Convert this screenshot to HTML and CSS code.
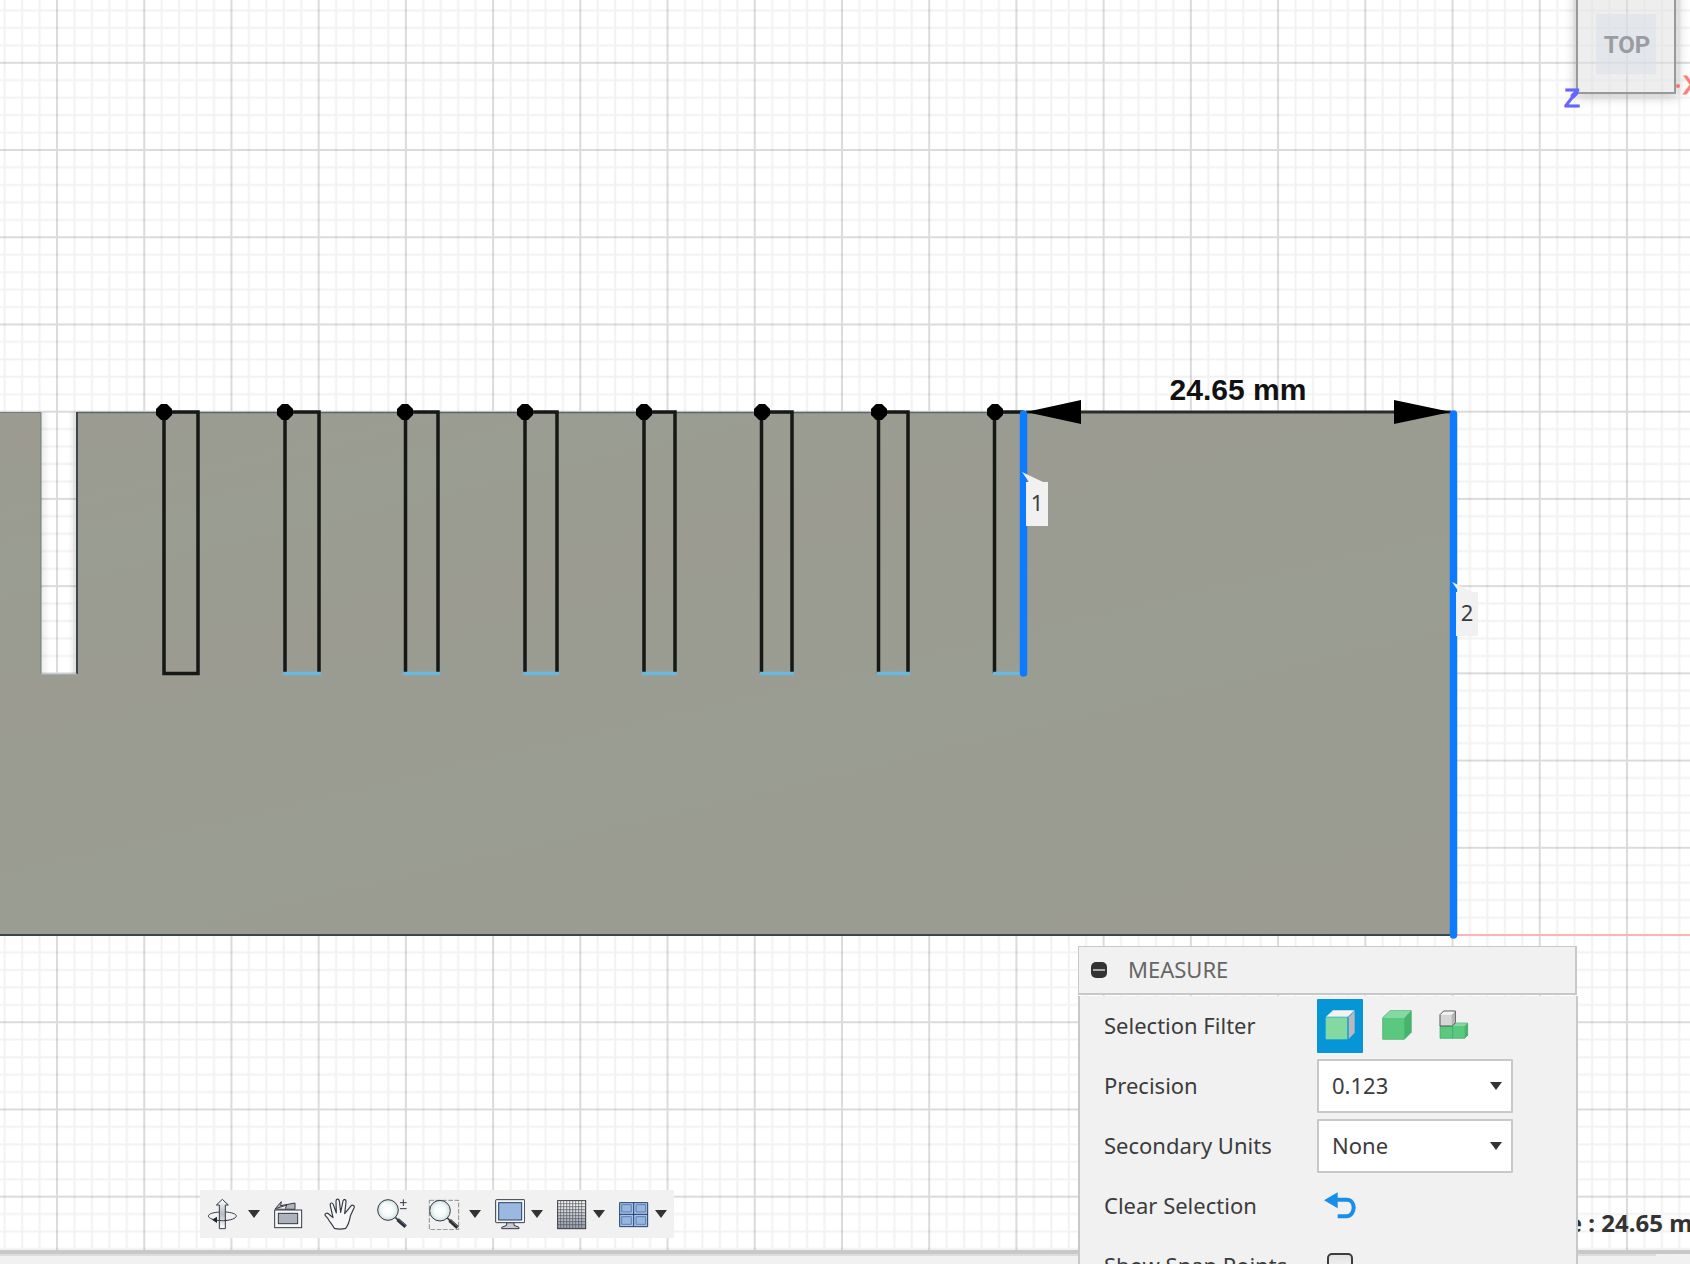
FILE: index.html
```html
<!DOCTYPE html>
<html lang="en">
<head>
<meta charset="utf-8">
<meta name="viewport" content="width=device-width, initial-scale=1">
<title>Measure</title>
<link rel="stylesheet" href="styles.css">
</head>
<body>
<main class="stage">
  <svg class="scene" role="img" aria-label="Model with measured distance">
    <defs>
      <pattern id="grid" patternUnits="userSpaceOnUse" x="13.4" y="19.2" width="87.22" height="87.22">
        <g stroke="#000" stroke-opacity=".05" stroke-width="2">
          <path d="M8.72 0V88M26.16 0V88M61.04 0V88M78.48 0V88M0 8.72H88M0 26.16H88M0 61.04H88M0 78.48H88"/>
          <path d="M43.6 0V88M0 43.6H88" stroke-opacity=".14"/>
        </g>
      </pattern>
      <linearGradient id="steel" gradientUnits="userSpaceOnUse" x1="0" y1="412" x2="180" y2="1180" spreadMethod="reflect">
        <stop offset="0" stop-color="#9c9b91"/><stop offset=".2" stop-color="#9a9d92"/>
        <stop offset=".36" stop-color="#9b9b91"/><stop offset=".62" stop-color="#9a9d92"/><stop offset="1" stop-color="#9b9b91"/>
      </linearGradient>
      <linearGradient id="slotShade"><stop offset="0" stop-color="#000" stop-opacity=".08"/><stop offset=".25" stop-color="#000" stop-opacity="0"/><stop offset=".75" stop-color="#000" stop-opacity="0"/><stop offset="1" stop-color="#000" stop-opacity=".1"/></linearGradient>
    </defs>
    <rect width="100%" height="100%" fill="#fff"/>
    <rect width="100%" height="100%" fill="url(#grid)"/>
    <rect x="1453" y="934" width="100%" height="2" fill="#ffb3b3"/>
    <path d="M0 412H41V674H77V412H1453V935H0Z" fill="url(#steel)"/>
    <path d="M41 412H77V674H41Z" fill="url(#slotShade)"/>
    <path d="M0 412.500H41V674" fill="none" stroke="#6f7d7c"/>
    <path d="M77 412.500H1023" fill="none" stroke="#59696a" stroke-width="1.500"/>
    <path d="M77 412V674M0 935H1453" fill="none" stroke="#3a484b" stroke-width="2"/>
    <path d="M41 674H77" stroke="#b4c0c6"/>
    <g fill="none" stroke="#161815" stroke-width="3.500">
      <path d="M164 673.500V412H198V673.500Z"/>
      <path d="M285 673V412H319V673M405.500 673V412H438V673M525 673V412H557V673M644 673V412H675V673M761.500 673V412H792V673M878.500 673V412H908V673M994.500 673V412H1023"/>
    </g>
    <path d="M283 673.500H321M403 673.500H440M523 673.500H559M642 673.500H677M760 673.500H794M877 673.500H910M993 673.500H1023" stroke="#68b9dd" stroke-width="3.500"/>
    <g fill="#000">
      <path id="dot" d="M161 404H167L172 409V415L167 420H161L156 415V409Z"/>
      <use href="#dot" x="121"/><use href="#dot" x="241"/><use href="#dot" x="361"/><use href="#dot" x="480"/><use href="#dot" x="598"/><use href="#dot" x="715"/><use href="#dot" x="831"/>
    </g>
    <path d="M1026 412H1451" stroke="#2c2c2a" stroke-width="3"/>
    <path d="M1023.500 414V673M1453.500 414V935" stroke="#0d7bff" stroke-width="7.500" stroke-linecap="round"/>
    <path d="M1026 412L1081 400V424ZM1451 412L1394 400V424Z"/>
    <text class="dimension" x="1238" y="400">24.65 mm</text>
    <g fill="#f1f1f1">
      <path d="M1022 472L1043 482H1048V526H1026V482H1029Z"/>
      <path d="M1452 582L1473 592H1478V636H1456V592H1459Z"/>
    </g>
    <text class="tag" x="1037" y="511">1</text>
    <text class="tag" x="1467" y="621">2</text>
  </svg>

  <svg class="viewcube" viewBox="0 0 150 130" role="img" aria-label="View cube">
    <defs><filter id="soft" x="-30%" y="-30%" width="160%" height="160%"><feGaussianBlur stdDeviation="6"/></filter>
    <mask id="outside"><path d="M0 0H150V130H0Z" fill="#fff"/><path d="M37 0H135V93H37Z"/></mask></defs>
    <g mask="url(#outside)"><path d="M35 -20H138V97H35Z" fill="#777" opacity=".4" filter="url(#soft)"/></g>
    <path d="M37 -4H135V93H37Z" fill="#dedede" fill-opacity=".52" stroke="#999" stroke-width="2"/>
    <path d="M56 14H116V74H56Z" fill="#d8dee8" fill-opacity=".5"/>
    <text class="cube-face" x="87" y="53">TOP</text>
    <path d="M36 93L33 96" stroke="#66f" stroke-width="5" stroke-linecap="round"/>
    <text class="axis axis-z" x="24" y="107">Z</text>
    <circle cx="138" cy="86" r="2" fill="#ff7070"/>
    <text class="axis axis-x" x="143" y="94">X</text>
  </svg>

  <output class="readout">e : 24.65 mm</output>

  <nav class="toolbar" aria-label="Navigation">
    <div class="split">
      <button class="tool" aria-label="Orbit"><svg viewBox="0 0 96 96"><defs><linearGradient id="metal" x2="0" y2="1"><stop stop-color="#fff"/><stop offset=".5" stop-color="#b7bac5"/><stop offset="1" stop-color="#fff"/></linearGradient></defs><path d="M39 42C18 43 4 48 4 54C4 61 22 68 46 68S88 61 88 54C88 48 74 43 55 42" fill="none" stroke="#343943" stroke-width="3"/><path d="M46 4L64 21H55V92H37V21H28Z" fill="url(#metal)" stroke="#343943" stroke-width="3"/><path d="M37 67C46 69 54 68 60 67" fill="none" stroke="#343943" stroke-width="3"/><path d="M15 65L30 56V75Z" fill="#20242c"/></svg></button>
      <button class="caret" aria-label="Orbit options"></button>
    </div>
    <div class="tools">
      <button class="tool" aria-label="Look at"><svg viewBox="0 0 96 96"><path d="M9 33L28 11L26 23L69 15V34Z" fill="#b0b5bd" stroke="#343943" stroke-width="3"/><path d="M14 31L44 21L40 32" fill="#eee" stroke="#343943" stroke-width="3"/><rect x="8" y="36" width="81" height="53" fill="#f8f8fb" stroke="#343943" stroke-width="3"/><rect x="19" y="46" width="58" height="31" fill="#aeb2ba" stroke="#343943" stroke-width="3"/></svg></button>
      <button class="tool" aria-label="Pan"><svg viewBox="0 0 96 96"><path d="M31 91C25 79 18 73 12 62L4 53C1 47 8 43 14 48L27 59L19 23C17 14 25 12 28 20L37 45L36 10C36 2 44 1 46 9L50 43L57 9C59 2 67 4 66 12L62 47L80 25C86 18 93 23 90 30L79 54C77 66 76 77 65 91C54 94 42 94 31 91Z" fill="#f7f7f9" stroke="#343943" stroke-width="3.500" stroke-linejoin="round"/></svg></button>
      <button class="tool" aria-label="Zoom"><svg viewBox="0 0 96 96"><defs><radialGradient id="lens"><stop stop-color="#fff"/><stop offset=".55" stop-color="#f5fafa"/><stop offset="1" stop-color="#cfe0df"/></radialGradient></defs><path d="M58 58L66 66" stroke="#343943" stroke-width="5"/><path d="M65 65L89 86" stroke="#2b323b" stroke-width="11"/><path d="M68 64L90 83" stroke="#7c858d" stroke-width="2"/><circle cx="36" cy="36" r="31" fill="url(#lens)" stroke="#343943" stroke-width="3"/><path d="M12 32Q17 14 33 11Q25 21 12 32" fill="#fff"/><path d="M82 4V24M72 14H92M72 32H92" stroke="#343943" stroke-width="3"/></svg></button>
      <div class="split">
        <button class="tool" aria-label="Zoom window"><svg viewBox="0 0 96 96"><rect x="4" y="7" width="88" height="88" fill="none" stroke="#777" stroke-width="2.500" stroke-dasharray="14 5"/><path d="M58 60L66 68" stroke="#343943" stroke-width="5"/><path d="M65 67L89 89" stroke="#30302f" stroke-width="11"/><path d="M68 66L90 86" stroke="#888" stroke-width="2"/><circle cx="36" cy="38" r="31" fill="url(#lens)" stroke="#343943" stroke-width="3"/></svg></button>
        <button class="caret" aria-label="Zoom window options"></button>
      </div>
    </div>
    <div class="split tight">
      <button class="tool" aria-label="Display settings"><svg viewBox="0 0 96 96"><path d="M41 74H63V82L78 88V92H26V88L41 82Z" fill="#c9ccd3" stroke="#343943" stroke-width="3"/><rect x="8" y="5" width="87" height="69" rx="2" fill="#f8f8fa" stroke="#343943" stroke-width="3"/><rect x="17" y="14" width="69" height="52" fill="#9ab8e0" stroke="#22416f" stroke-width="3"/></svg></button>
      <button class="caret" aria-label="Display options"></button>
    </div>
    <div class="split tight">
      <button class="tool" aria-label="Grid and snaps"><svg viewBox="0 0 96 96"><defs><linearGradient id="mesh" x2="0" y2="1"><stop stop-color="#fff"/><stop offset="1" stop-color="#929dac"/></linearGradient></defs><rect x="8" y="8" width="84" height="84" fill="url(#mesh)" stroke="#333" stroke-width="3"/><path d="M17 8V92M26 8V92M35 8V92M44 8V92M53 8V92M62 8V92M71 8V92M80 8V92M8 17H92M8 26H92M8 35H92M8 44H92M8 53H92M8 62H92M8 71H92M8 80H92" stroke="#505257" stroke-width="2"/></svg></button>
      <button class="caret" aria-label="Grid options"></button>
    </div>
    <div class="split tight">
      <button class="tool" aria-label="Viewports"><svg viewBox="0 0 96 96"><path d="M8 14H92V86H8Z" fill="#a9c4e6" stroke="#1f3d6e" stroke-width="3"/><path d="M50 14V86M8 49H92" stroke="#1f3d6e" stroke-width="3"/><path d="M14 20H43V42H14ZM57 20H86V42H57ZM14 56H43V79H14ZM57 56H86V79H57Z" fill="#97b6de" stroke="#5c80b1" stroke-width="3"/></svg></button>
      <button class="caret" aria-label="Viewport options"></button>
    </div>
  </nav>

  <section class="panel" aria-labelledby="panel-title">
    <header class="panel-head">
      <button class="collapse" aria-label="Collapse"></button>
      <h1 class="panel-title" id="panel-title">MEASURE</h1>
    </header>
    <form class="panel-body">
      <div class="row">
        <span class="label" id="filter-label">Selection Filter</span>
        <div class="filters" role="group" aria-labelledby="filter-label">
          <button type="button" class="filter active" aria-label="Faces, edges and vertices"><svg viewBox="0 0 90 90"><path d="M3 20L24 1H89L69 20Z" fill="#f2f2f2"/><path d="M71 22L89 2V68L71 87Z" fill="#b9b9bd"/><path d="M2 22H67V88H2Z" fill="#82d9a1"/></svg></button>
          <button type="button" class="filter" aria-label="Bodies"><svg viewBox="0 0 90 90"><path d="M2 23L24 2H88V67L67 88H2Z" fill="#5bc880" stroke="#3ca763" stroke-width="2"/><path d="M3 24L24 3H87L67 24Z" fill="#82d9a1"/><path d="M67 24L87 3V67L67 87Z" fill="#49b26c"/></svg></button>
          <button type="button" class="filter" aria-label="Components"><svg viewBox="0 0 90 90"><path d="M3 46H41V85H3Z" fill="#5bc880" stroke="#3ca763" stroke-width="2"/><path d="M41 48L51 39H86V76L77 85H41Z" fill="#5bc880" stroke="#3ca763" stroke-width="2"/><path d="M42 48L52 40H85L77 48Z" fill="#82d9a1"/><path d="M77 48L86 40V76L77 85Z" fill="#49b26c"/><path d="M3 14L14 3H49V38L38 48H3Z" fill="#d6d6d6" stroke="#555" stroke-width="3"/><path d="M5 14L15 5H47L38 14Z" fill="#f5f5f5"/><path d="M38 14L48 5V37L38 46Z" fill="#b5b5b5"/></svg></button>
        </div>
      </div>
      <div class="row">
        <label class="label" for="precision">Precision</label>
        <div class="field"><select id="precision"><option>0.123</option></select></div>
      </div>
      <div class="row">
        <label class="label" for="units">Secondary Units</label>
        <div class="field"><select id="units"><option>None</option></select></div>
      </div>
      <div class="row">
        <span class="label" id="clear-label">Clear Selection</span>
        <button type="button" class="filter" aria-labelledby="clear-label"><svg class="undo" viewBox="0 0 96 80"><path d="M0 24L41 0V48Z" fill="#178fea"/><path d="M38 23H68C82 23 89 34 89 46S82 72 68 72H41" fill="none" stroke="#178fea" stroke-width="12"/></svg></button>
      </div>
      <div class="row">
        <label class="label" for="snap">Show Snap Points</label>
        <input class="check" type="checkbox" id="snap">
      </div>
    </form>
  </section>
</main>
<footer class="dock"><div class="dock-tab"></div></footer>
</body>
</html>
```
FILE: styles.css
```css
* { box-sizing: border-box; }

body {
  margin: 0;
  height: 100vh;
  overflow: hidden;
  display: grid;
  grid-template-rows: 1fr 14px;
  background: #fff;
  color: #3c3c3c;
  font: 22px/30px "Noto Sans", "Open Sans", sans-serif;
}

button {
  margin: 0;
  padding: 0;
  border: 0;
  background: none;
}

.stage { position: relative; }

.scene {
  position: absolute;
  width: 100%;
  height: 100%;
}

.dimension {
  font: bold 30px "Liberation Sans", sans-serif;
  text-anchor: middle;
  fill: #111;
}

.tag {
  text-anchor: middle;
  fill: #3c3c3c;
}

.viewcube {
  position: absolute;
  top: 0;
  right: 0;
  width: 150px;
  height: 130px;
}

.cube-face {
  font: bold 24px Roboto, sans-serif;
  text-anchor: middle;
  fill: #999ca1;
}

.axis { font: 26px "Liberation Sans", sans-serif; }
.axis-z { fill: #6464ff; stroke: #6464ff; }
.axis-x { fill: #ff7b7b; stroke: #ff7b7b; }

.readout {
  position: absolute;
  right: -26px;
  bottom: 12px;
  font-weight: bold;
  font-size: 24px;
  white-space: nowrap;
  color: #333;
}

.toolbar {
  position: absolute;
  left: 200px;
  bottom: 12px;
  height: 48px;
  padding: 0 6px 0 7px;
  display: flex;
  align-items: center;
  gap: 11px;
  background: #f1f1f1;
}

.tools { display: flex; gap: 20px; }
.split { display: flex; align-items: center; gap: 8px; }
.tight { gap: 5px; }

.tool, .tool svg {
  display: block;
  width: 32px;
  height: 32px;
}

.caret {
  width: 14px;
  height: 32px;
  display: grid;
  place-items: center;
}

.caret::before, .field::after {
  content: "";
  width: 12px;
  height: 8px;
  background: #333;
  clip-path: polygon(0 0, 100% 0, 50% 100%);
}

.panel {
  position: absolute;
  top: 946px;
  right: 112px;
  width: 500px;
  display: grid;
  gap: 1px;
  z-index: 1;
}

.panel-head {
  height: 49px;
  margin-right: 1px;
  padding-left: 12px;
  display: flex;
  align-items: center;
  gap: 21px;
  background: #f1f1f1;
  border: 1px solid #c8c8c8;
  border-right-width: 2px;
  border-bottom-width: 2px;
}

.collapse {
  width: 16px;
  height: 16px;
  display: grid;
  place-items: center;
  background: #333;
  border-radius: 5px;
}

.collapse::before {
  content: "";
  width: 12px;
  height: 2px;
  background: #aaa;
}

.panel-title {
  margin: 0;
  padding-bottom: 2px;
  font-size: 22px;
  font-weight: normal;
  color: #666;
}

.panel-body {
  padding: 3px 24px;
  display: grid;
  gap: 6px;
  background: #f1f1f1;
  border: solid #c8c8c8;
  border-width: 0 2px;
}

.row {
  height: 54px;
  display: grid;
  grid-template-columns: 213px 196px;
  align-items: center;
}

.label { padding-bottom: 2px; }

.filters { display: flex; gap: 11px; }

.filter {
  width: 46px;
  height: 54px;
  padding-bottom: 2px;
  display: grid;
  place-items: center;
  border-radius: 1px;
}

.filter svg { width: 30px; height: 30px; }
.filter .undo { width: 32px; height: 27px; }
.active { background: #0696d7; }

.field {
  display: grid;
  grid-template-columns: 1fr 23px;
  align-items: center;
}

.field select {
  grid-area: 1 / 1 / 2 / 3;
  width: 100%;
  height: 54px;
  padding: 0 13px 2px;
  appearance: none;
  background: #fff;
  border: 2px solid #c8c8c8;
  border-radius: 1px;
  color: inherit;
  font: inherit;
}

.field::after {
  grid-area: 1 / 2;
  z-index: 1;
  pointer-events: none;
}

.check {
  appearance: none;
  width: 26px;
  height: 26px;
  margin: 0 10px;
  background: linear-gradient(#e2e2e2, #fff);
  border: 2px solid #3c3c3c;
  border-radius: 5px;
}

.dock {
  background: #f1f1f1;
  border-top: 4px solid #c8c8c8;
}

.dock-tab {
  height: 2px;
  margin-right: 34px;
  background: #ddd;
}
```
